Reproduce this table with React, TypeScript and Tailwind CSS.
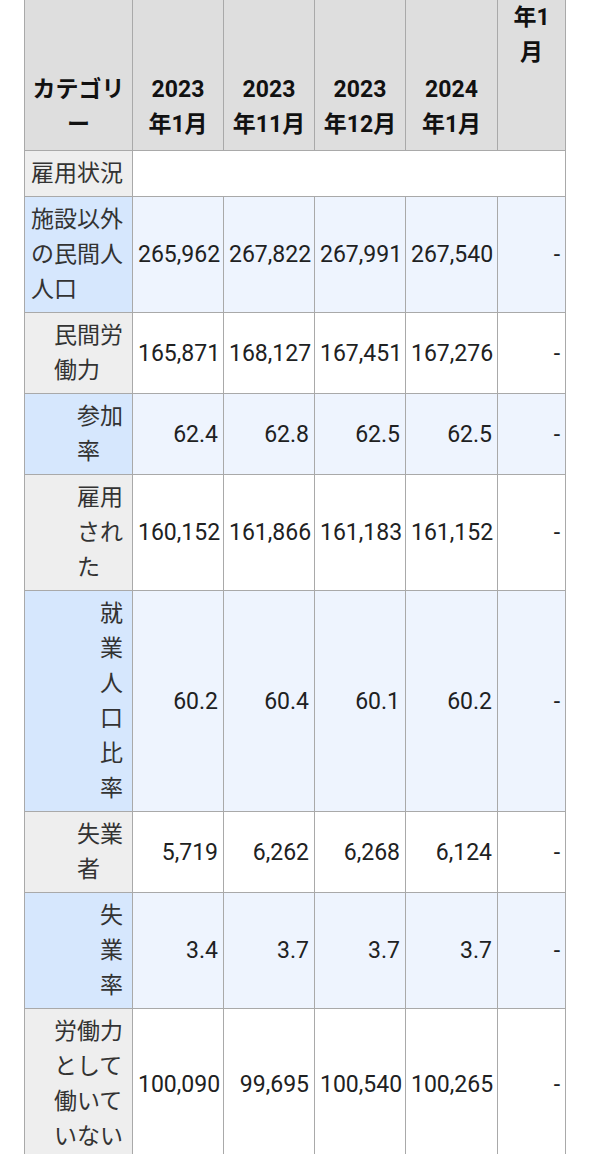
import React from 'react';

type Row = {
  label: string;
  indent: number;
  values: string[];
  blue: boolean;
};

const rows: Row[] = [
  { label: '施設以外の民間人人口', indent: 0, values: ['265,962', '267,822', '267,991', '267,540', '-'], blue: true },
  { label: '民間労働力', indent: 1, values: ['165,871', '168,127', '167,451', '167,276', '-'], blue: false },
  { label: '参加率', indent: 2, values: ['62.4', '62.8', '62.5', '62.5', '-'], blue: true },
  { label: '雇用された', indent: 2, values: ['160,152', '161,866', '161,183', '161,152', '-'], blue: false },
  { label: '就業人口比率', indent: 3, values: ['60.2', '60.4', '60.1', '60.2', '-'], blue: true },
  { label: '失業者', indent: 2, values: ['5,719', '6,262', '6,268', '6,124', '-'], blue: false },
  { label: '失業率', indent: 3, values: ['3.4', '3.7', '3.7', '3.7', '-'], blue: true },
  { label: '労働力として働いていない', indent: 1, values: ['100,090', '99,695', '100,540', '100,265', '-'], blue: false },
];

const indentPad = ['pl-[6px]', 'pl-[29px]', 'pl-[52px]', 'pl-[75px]'];

const headers = [
  ['2023', '年1月'],
  ['2023', '年11月'],
  ['2023', '年12月'],
  ['2024', '年1月'],
];

export default function App() {
  return (
    <div
      className="min-h-[1154px] overflow-hidden bg-white text-[23px] leading-[35px] text-[#202122]"
      style={{ fontFamily: "Roboto, 'Noto Sans CJK JP', sans-serif" }}
    >
      <table className="-mt-px ml-6 w-[541px] table-fixed border-collapse">
        <colgroup>
          <col className="w-[108px]" />
          <col className="w-[91px]" />
          <col className="w-[91px]" />
          <col className="w-[91px]" />
          <col className="w-[92px]" />
          <col className="w-[68px]" />
        </colgroup>
        <thead>
          <tr className="h-[151px]">
            <th className="border border-[#a9a9a9] bg-[#dedede] px-[5px] pb-[8px] text-center align-bottom font-bold text-[#111]">
              カテゴリ
              <br />ー
            </th>
            {headers.map(([y, m]) => (
              <th
                key={y + m}
                className="border border-[#a9a9a9] bg-[#dedede] px-[5px] pb-[8px] text-center align-bottom font-bold text-[#111]"
              >
                {y}
                <br />
                {m}
              </th>
            ))}
            <th className="border border-[#a9a9a9] bg-[#dedede] px-[5px] pt-0 text-center align-top font-bold text-[#111]">
              年1
              <br />月
            </th>
          </tr>
        </thead>
        <tbody>
          <tr>
            <th className="border border-[#a9a9a9] bg-[#eeeeee] py-[5px] pl-[6px] pr-[5px] text-left align-middle font-normal text-[#333]">
              雇用状況
            </th>
            <td colSpan={5} className="border border-[#a9a9a9] bg-white" />
          </tr>
          {rows.map((r) => (
            <tr key={r.label}>
              <th
                className={`border border-[#a9a9a9] py-[5px] pr-[5px] text-left align-middle font-normal text-[#333] ${indentPad[r.indent]} ${
                  r.blue ? 'bg-[#d6e7fd]' : 'bg-[#eeeeee]'
                }`}
              >
                {r.label}
              </th>
              {r.values.map((v, i) => (
                <td
                  key={i}
                  className={`border border-[#a9a9a9] px-[5px] py-[5px] text-right align-middle ${
                    r.blue ? 'bg-[#eef4fe]' : 'bg-white'
                  }`}
                >
                  {v}
                </td>
              ))}
            </tr>
          ))}
        </tbody>
      </table>
    </div>
  );
}
